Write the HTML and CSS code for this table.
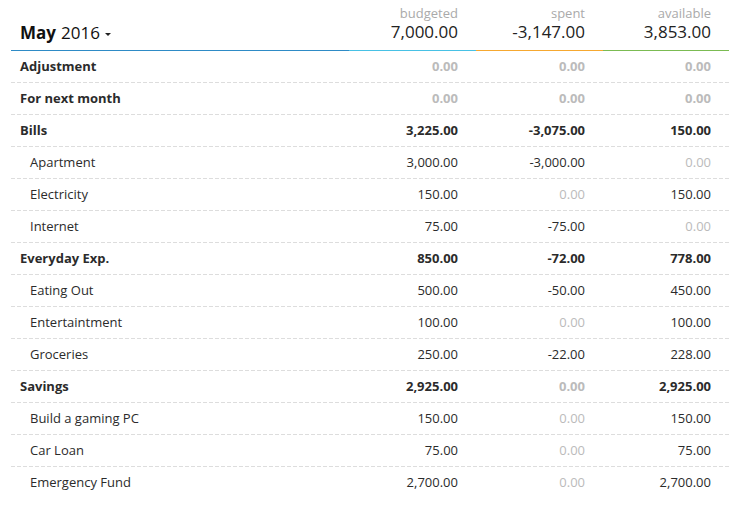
FILE: index.html
```html
<!DOCTYPE html>
<html>
<head>
<meta charset="utf-8">
<link rel="stylesheet" href="styles.css">
</head>
<body>
<div class="budget">
  <div class="head">
    <div class="hcell hname"><span class="month">May</span> 2016 <span class="caret"></span></div>
    <div class="hcell hnum c-budget"><div class="lbl">budgeted</div><div class="tot">7,000.00</div></div>
    <div class="hcell hnum c-spent"><div class="lbl">spent</div><div class="tot">-3,147.00</div></div>
    <div class="hcell hnum c-avail"><div class="lbl">available</div><div class="tot">3,853.00</div></div>
  </div>

  <div class="row group"><div class="name">Adjustment</div><div class="num zero">0.00</div><div class="num zero">0.00</div><div class="num zero">0.00</div></div>
  <div class="row group"><div class="name">For next month</div><div class="num zero">0.00</div><div class="num zero">0.00</div><div class="num zero">0.00</div></div>
  <div class="row group"><div class="name">Bills</div><div class="num">3,225.00</div><div class="num">-3,075.00</div><div class="num">150.00</div></div>
  <div class="row item"><div class="name">Apartment</div><div class="num">3,000.00</div><div class="num">-3,000.00</div><div class="num zero">0.00</div></div>
  <div class="row item"><div class="name">Electricity</div><div class="num">150.00</div><div class="num zero">0.00</div><div class="num">150.00</div></div>
  <div class="row item"><div class="name">Internet</div><div class="num">75.00</div><div class="num">-75.00</div><div class="num zero">0.00</div></div>
  <div class="row group"><div class="name">Everyday Exp.</div><div class="num">850.00</div><div class="num">-72.00</div><div class="num">778.00</div></div>
  <div class="row item"><div class="name">Eating Out</div><div class="num">500.00</div><div class="num">-50.00</div><div class="num">450.00</div></div>
  <div class="row item"><div class="name">Entertaintment</div><div class="num">100.00</div><div class="num zero">0.00</div><div class="num">100.00</div></div>
  <div class="row item"><div class="name">Groceries</div><div class="num">250.00</div><div class="num">-22.00</div><div class="num">228.00</div></div>
  <div class="row group"><div class="name">Savings</div><div class="num">2,925.00</div><div class="num zero">0.00</div><div class="num">2,925.00</div></div>
  <div class="row item"><div class="name">Build a gaming PC</div><div class="num">150.00</div><div class="num zero">0.00</div><div class="num">150.00</div></div>
  <div class="row item"><div class="name">Car Loan</div><div class="num">75.00</div><div class="num zero">0.00</div><div class="num">75.00</div></div>
  <div class="row item last"><div class="name">Emergency Fund</div><div class="num">2,700.00</div><div class="num zero">0.00</div><div class="num">2,700.00</div></div>
</div>
</body>
</html>
```
FILE: styles.css
```css
html, body {
  margin: 0;
  padding: 0;
  background: #ffffff;
}
body {
  font-family: "Open Sans", "Liberation Sans", sans-serif;
  color: #2b2b2b;
  font-size: 13px;
}
.budget {
  margin: 0 9px 0 11px;
}
.head, .row {
  display: grid;
  grid-template-columns: 1fr 127px 127px 126px;
}
.hcell {
  height: 51px;
  box-sizing: border-box;
  border-bottom: 1px solid #2e8bc6;
}
.hname {
  display: flex;
  align-items: flex-end;
  padding: 0 0 5px 9px;
  font-size: 17px;
  line-height: 24px;
  color: #111111;
}
.month {
  font-weight: 700;
  margin-right: 5px;
}
.caret {
  display: inline-block;
  width: 0;
  height: 0;
  border-left: 3px solid transparent;
  border-right: 3px solid transparent;
  border-top: 3px solid #222222;
  margin: 0 0 9px 5px;
}
.hnum {
  text-align: right;
  padding: 5px 18px 0 0;
}
.c-budget { border-bottom-color: #47c1e5; }
.c-spent { border-bottom-color: #f6a830; }
.c-avail { border-bottom-color: #7bbb52; }
.lbl {
  font-size: 13px;
  line-height: 16px;
  color: #aaaaaa;
}
.tot {
  font-size: 17px;
  line-height: 21px;
  color: #222222;
}
.row {
  height: 32px;
  box-sizing: border-box;
  align-items: center;
  background-image: repeating-linear-gradient(to right, #dddddd 0 4px, transparent 4px 6px);
  background-size: 100% 1px;
  background-position: left bottom;
  background-repeat: no-repeat;
  padding-bottom: 3px;
}
.row.last {
  background-image: none;
}
.name {
  padding-left: 9px;
  line-height: 18px;
}
.item .name {
  padding-left: 19px;
}
.group {
  font-weight: 700;
}
.num {
  text-align: right;
  padding-right: 18px;
  line-height: 18px;
}
.num.zero {
  color: #bbbbbb;
}
```
